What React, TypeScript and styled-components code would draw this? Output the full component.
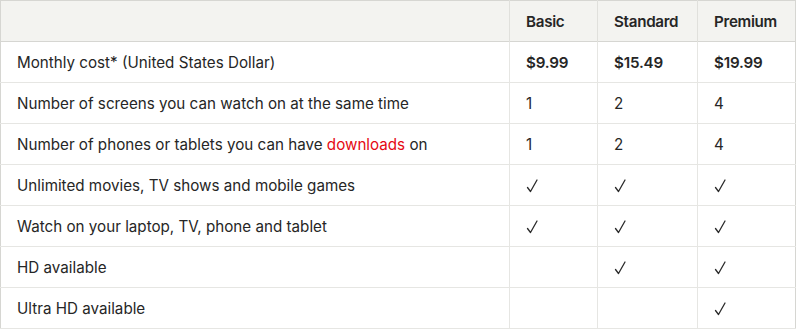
import React from 'react';
import styled, { createGlobalStyle } from 'styled-components';

const GlobalStyle = createGlobalStyle`
  html, body {
    margin: 0;
    padding: 0;
    background: #fff;
  }
  body {
    font-family: Inter, "Noto Sans", sans-serif;
    color: #262626;
  }
`;

const Table = styled.table`
  width: 796px;
  border-collapse: collapse;
  table-layout: fixed;
  font-size: 15.2px;
  border: 1px solid #d6d6d2;
`;

const HeadRow = styled.tr`
  background: #f3f3f0;
  border-bottom: 1px solid #d6d6d2;
`;

const Row = styled.tr`
  border-bottom: 1px solid #e6e6e3;
`;

const Th = styled.th`
  height: 40px;
  padding: 0 16px;
  text-align: left;
  font-weight: 600;
  letter-spacing: -0.3px;
  border-left: 1px solid #e0e0dc;
  &:first-child {
    border-left: none;
  }
`;

const Td = styled.td<{ $bold?: boolean }>`
  height: 40px;
  padding: 0 16px;
  font-weight: ${p => (p.$bold ? 600 : 400)};
  letter-spacing: ${p => (p.$bold ? '-0.2px' : '0')};
  border-left: 1px solid #e6e6e3;
  &:first-child {
    border-left: none;
  }
`;

const Link = styled.a`
  color: #e50914;
  text-decoration: none;
`;

const CheckIcon = styled.svg`
  display: block;
  margin-top: 2px;
`;

const Check = () => (
  <CheckIcon width="13" height="14" viewBox="0 0 13 14" aria-label="yes">
    <polyline
      points="1.5,8.5 4.5,12.5 11,1"
      fill="none"
      stroke="#2a2a2a"
      strokeWidth="1.3"
      strokeLinejoin="round"
      strokeLinecap="round"
    />
  </CheckIcon>
);

type Plan = 'basic' | 'standard' | 'premium';

interface Feature {
  label: React.ReactNode;
  values: Record<Plan, React.ReactNode>;
  bold?: boolean;
}

const yes = <Check />;

const features: Feature[] = [
  {
    label: 'Monthly cost* (United States Dollar)',
    values: { basic: '$9.99', standard: '$15.49', premium: '$19.99' },
    bold: true,
  },
  {
    label: 'Number of screens you can watch on at the same time',
    values: { basic: '1', standard: '2', premium: '4' },
  },
  {
    label: (
      <>
        Number of phones or tablets you can have <Link href="#">downloads</Link> on
      </>
    ),
    values: { basic: '1', standard: '2', premium: '4' },
  },
  {
    label: 'Unlimited movies, TV shows and mobile games',
    values: { basic: yes, standard: yes, premium: yes },
  },
  {
    label: 'Watch on your laptop, TV, phone and tablet',
    values: { basic: yes, standard: yes, premium: yes },
  },
  {
    label: 'HD available',
    values: { basic: null, standard: yes, premium: yes },
  },
  {
    label: 'Ultra HD available',
    values: { basic: null, standard: null, premium: yes },
  },
];

const plans: Plan[] = ['basic', 'standard', 'premium'];

export default function App() {
  return (
    <>
      <GlobalStyle />
      <Table>
        <colgroup>
          <col style={{ width: 509 }} />
          <col style={{ width: 88 }} />
          <col style={{ width: 100 }} />
          <col />
        </colgroup>
        <thead>
          <HeadRow>
            <Th />
            <Th>Basic</Th>
            <Th>Standard</Th>
            <Th>Premium</Th>
          </HeadRow>
        </thead>
        <tbody>
          {features.map((f, i) => (
            <Row key={i}>
              <Td>{f.label}</Td>
              {plans.map(p => (
                <Td key={p} $bold={f.bold}>
                  {f.values[p]}
                </Td>
              ))}
            </Row>
          ))}
        </tbody>
      </Table>
    </>
  );
}
